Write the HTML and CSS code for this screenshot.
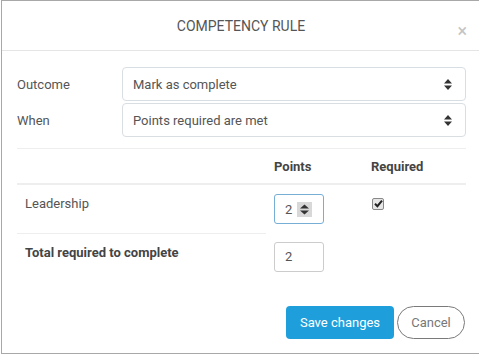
FILE: index.html
```html
<!DOCTYPE html>
<html lang="en">
<head>
  <meta charset="UTF-8" />
  <title>Competency rule</title>
  <link rel="stylesheet" href="styles.css">
</head>
<body>
  <div class="modal">
    <div class="modal-header">
      <h4 class="modal-title">Competency rule</h4>
      <span class="close">&times;</span>
    </div>

    <div class="modal-body">
      <div class="form-row">
        <label class="form-label">Outcome</label>
        <div class="select">
          <span>Mark as complete</span>
          <svg class="caret" width="8" height="11" viewBox="0 0 8 11"><path d="M0 4.5 L4 0 L8 4.5 Z M0 6.5 L8 6.5 L4 11 Z" fill="#333"/></svg>
        </div>
      </div>
      <div class="form-row">
        <label class="form-label">When</label>
        <div class="select">
          <span>Points required are met</span>
          <svg class="caret" width="8" height="11" viewBox="0 0 8 11"><path d="M0 4.5 L4 0 L8 4.5 Z M0 6.5 L8 6.5 L4 11 Z" fill="#333"/></svg>
        </div>
      </div>

      <table class="rule-table">
        <thead>
          <tr>
            <th class="col-name"></th>
            <th class="col-points">Points</th>
            <th class="col-req">Required</th>
          </tr>
        </thead>
        <tbody>
          <tr>
            <td>Leadership</td>
            <td>
              <div class="num-input focused">
                <span>2</span>
                <span class="spinner">
                  <svg width="15" height="15" viewBox="0 0 15 15"><path d="M3 6.5 L7.5 2.5 L12 6.5 Z M3 8.5 L12 8.5 L7.5 12.5 Z" fill="#333"/></svg>
                </span>
              </div>
            </td>
            <td>
              <span class="checkbox">
                <svg width="9" height="9" viewBox="0 0 9 9"><path d="M1 4.8 L3.4 7.2 L8 1.6" fill="none" stroke="#222" stroke-width="2"/></svg>
              </span>
            </td>
          </tr>
          <tr class="total-row">
            <td class="total-label">Total required to complete</td>
            <td><div class="num-input"><span>2</span></div></td>
            <td></td>
          </tr>
        </tbody>
      </table>
    </div>

    <div class="modal-footer">
      <button class="btn btn-primary">Save changes</button>
      <button class="btn btn-cancel">Cancel</button>
    </div>
  </div>
</body>
</html>
```

FILE: styles.css
```css
body {
  margin: 0;
  background: #fff;
  font-family: Roboto, "Liberation Sans", Arial, sans-serif;
  font-size: 13px;
  color: #555;
  overflow: hidden;
}

.modal {
  width: 479px;
  height: 354px;
  margin-left: 1px;
  border: 1px solid #a8a8a8;
  border-right: none;
  background: #fff;
  box-sizing: border-box;
  position: relative;
}

.modal-header {
  height: 49px;
  border-bottom: 1px solid #e5e5e5;
  display: flex;
  align-items: center;
  justify-content: center;
}

.modal-title {
  margin: 0;
  padding-top: 1px;
  font-size: 14px;
  font-weight: normal;
  text-transform: uppercase;
  letter-spacing: 0;
  color: #555;
}

.close {
  position: absolute;
  right: 13px;
  top: 20px;
  font-size: 18px;
  line-height: 20px;
  color: #c4c4c4;
}

.modal-body {
  padding: 16px 14px 0 15px;
}

.form-row {
  display: flex;
  align-items: center;
  margin-bottom: 2px;
}

.form-label {
  width: 105px;
  flex: none;
}

.select {
  flex: 1;
  height: 34px;
  box-sizing: border-box;
  border: 1px solid #d9dee2;
  border-radius: 4px;
  display: flex;
  align-items: center;
  justify-content: space-between;
  padding: 0 13px 0 10px;
  font-size: 13px;
  color: #555;
}

.rule-table {
  width: 100%;
  border-collapse: collapse;
  margin-top: 11px;
  border-top: 1px solid #eceeef;
}

.rule-table th {
  height: 34px;
  text-align: left;
  font-weight: bold;
  color: #444;
  padding: 0 8px;
  border-bottom: 2px solid #eceeef;
}

.col-name { width: 233px; }
.col-points { width: 81px; }

.rule-table td {
  padding: 9px 8px 7px;
  vertical-align: top;
  line-height: 19px;
}

.rule-table tbody tr:first-child td {
  height: 32px;
}

.total-row td {
  padding-top: 8px;
}

.total-row .total-label {
  border-top: 1px solid #eceeef;
  font-weight: bold;
  color: #444;
  padding-top: 9px;
}

.num-input {
  width: 50px;
  height: 30px;
  box-sizing: border-box;
  border: 1px solid #ccc;
  border-radius: 3px;
  display: flex;
  align-items: center;
  padding-left: 10px;
  font-size: 13px;
  color: #555;
}

.num-input.focused {
  border-color: #77aed6;
}

.spinner {
  margin-left: 5px;
  width: 15px;
  height: 15px;
  background: #d8d8d8;
  display: flex;
}

.checkbox {
  display: inline-flex;
  align-items: center;
  justify-content: center;
  width: 10px;
  height: 10px;
  margin-top: 2px;
  margin-left: 1px;
  border: 1px solid #888;
  border-radius: 2px;
  background: #e6e6e6;
  box-sizing: content-box;
}

.modal-footer {
  position: absolute;
  right: 15px;
  top: 305px;
  display: flex;
  gap: 3px;
}

.btn {
  height: 33px;
  font-family: inherit;
  font-size: 13px;
  cursor: pointer;
}

.btn-primary {
  width: 108px;
  border: none;
  border-radius: 4px;
  background: #1e9fdb;
  color: #fff;
}

.btn-cancel {
  width: 68px;
  border: 1px solid #7a7a7a;
  border-radius: 17px;
  background: #fff;
  color: #777;
}
```
